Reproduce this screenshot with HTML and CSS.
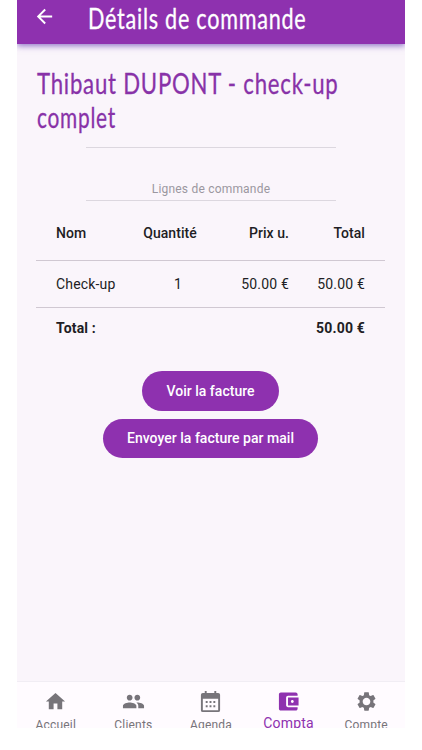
FILE: index.html
```html
<!DOCTYPE html>
<html lang="fr">
<head>
    <meta charset="utf-8">
    <meta name="viewport" content="width=device-width, initial-scale=1">
    <title>Détails de commande</title>
    <link rel="stylesheet" href="styles.css">
</head>
<body>
<div class="app">
    <header class="topbar">
        <svg class="back" viewBox="0 0 24 24"><path d="M20 11H7.83l5.59-5.59L12 4l-8 8 8 8 1.41-1.41L7.83 13H20v-2z"/></svg>
        <h1 class="page-title">Détails de commande</h1>
    </header>

    <main class="content">
        <h2 class="order-title"><span class="line1">Thibaut DUPONT - check-up</span><br><span class="line2">complet</span></h2>
        <div class="section">
            <span>Lignes de commande</span>
        </div>

        <table class="lines">
            <tr class="head">
                <th class="name">Nom</th>
                <th class="qty">Quantité</th>
                <th class="price">Prix u.</th>
                <th class="total">Total</th>
            </tr>
            <tr class="line">
                <td class="name">Check-up</td>
                <td class="qty">1</td>
                <td class="price">50.00 €</td>
                <td class="total">50.00 €</td>
            </tr>
            <tr class="sum">
                <td class="name">Total :</td>
                <td class="total" colspan="3">50.00 €</td>
            </tr>
        </table>

        <div class="actions">
            <button class="btn">Voir la facture</button>
            <button class="btn">Envoyer la facture par mail</button>
        </div>
    </main>

    <nav class="tabs">
        <a class="tab">
            <svg viewBox="0 0 24 24"><path d="M10 20v-6h4v6h5v-8h3L12 3 2 12h3v8z"/></svg>
            <span>Accueil</span>
        </a>
        <a class="tab">
            <svg viewBox="0 0 24 24"><path d="M16 11c1.660 0 2.990-1.340 2.990-3S17.660 5 16 5s-3 1.340-3 3 1.340 3 3 3zm-8 0c1.660 0 2.990-1.340 2.990-3S9.660 5 8 5 5 6.340 5 8s1.340 3 3 3zm0 2c-2.330 0-7 1.170-7 3.500V19h14v-2.500C15 14.170 10.330 13 8 13zm8 0c-.29 0-.62.02-.97.05 1.160.84 1.970 1.970 1.970 3.450V19h6v-2.500c0-2.330-4.670-3.500-7-3.500z"/></svg>
            <span>Clients</span>
        </a>
        <a class="tab">
            <svg viewBox="0 0 24 24"><path fill-rule="evenodd" d="M4 3h2V1h2v2h8V1h2v2h2a2 2 0 0 1 2 2v16a2 2 0 0 1-2 2H4a2 2 0 0 1-2-2V5a2 2 0 0 1 2-2zM4 9v12h16V9z"/><path d="M7 11.500h2v2H7zm4 0h2v2h-2zm4 0h2v2h-2zm-8 4.500h2v2H7zm4 0h2v2h-2zm4 0h2v2h-2z"/></svg>
            <span>Agenda</span>
        </a>
        <a class="tab active">
            <svg viewBox="0 0 24 24"><path d="M21.500 18v1.500c0 1.100-.9 2-2 2H4c-1.110 0-2-.9-2-2v-15c0-1.100.89-2 2-2h15.500c1.100 0 2 .9 2 2V6h-10c-1.110 0-2 .9-2 2v8c0 1.100.89 2 2 2zM11.500 16.300h11V7.700h-11zm4.500-2.800c-.83 0-1.500-.67-1.500-1.500s.67-1.500 1.500-1.500 1.500.67 1.500 1.500-.67 1.500-1.500 1.500z" fill-rule="evenodd"/></svg>
            <span>Compta</span>
        </a>
        <a class="tab">
            <svg viewBox="0 0 24 24"><path d="M19.140 12.940c.04-.3.06-.61.06-.94 0-.32-.02-.64-.07-.94l2.030-1.580c.18-.14.23-.41.12-.61l-1.920-3.320c-.12-.22-.37-.29-.59-.22l-2.390.96c-.5-.38-1.030-.7-1.620-.94l-.36-2.540c-.04-.24-.24-.41-.48-.41h-3.840c-.24 0-.43.17-.47.41l-.36 2.540c-.59.24-1.130.57-1.620.94l-2.390-.96c-.22-.08-.47 0-.59.22L2.740 8.870c-.12.21-.08.47.12.61l2.030 1.580c-.05.3-.09.63-.09.94s.02.64.07.94l-2.030 1.580c-.18.14-.23.41-.12.61l1.920 3.320c.12.22.37.29.59.22l2.390-.96c.5.38 1.030.7 1.620.94l.36 2.540c.05.24.24.41.48.41h3.840c.24 0 .44-.17.47-.41l.36-2.540c.59-.24 1.130-.56 1.620-.94l2.390.96c.22.08.47 0 .59-.22l1.920-3.320c.12-.22.07-.47-.12-.61l-2.010-1.580zM12 16c-2.200 0-4-1.800-4-4s1.800-4 4-4 4 1.800 4 4-1.800 4-4 4z"/></svg>
            <span>Compte</span>
        </a>
    </nav>
</div>
</body>
</html>
```

FILE: styles.css
```css
* {
    box-sizing: border-box;
}

body {
    margin: 0;
    background: #fff;
    font-family: Roboto, "Liberation Sans", sans-serif;
    color: #211d24;
}

.app {
    display: flex;
    flex-direction: column;
    width: 388px;
    height: 728px;
    margin-left: 17px;
    overflow: hidden;
    background: #faf5fb;
}

.topbar {
    display: flex;
    flex: none;
    height: 44px;
    padding-left: 16px;
    background: #8e31af;
    box-shadow: 0 2px 6px rgba(90, 50, 175, 0.65);
}

.back {
    width: 23px;
    height: 23px;
    margin-top: 5px;
    fill: #fff;
}

.page-title,
.order-title {
    margin: 0;
    font-family: Lato, sans-serif;
    font-weight: 400;
    white-space: nowrap;
    letter-spacing: 1px;
    -webkit-text-stroke: 0.3px currentColor;
}

.page-title {
    margin: 0 0 0 32px;
    font-size: 29px;
    line-height: 36px;
    color: #fff;
    transform: scaleX(0.744);
    transform-origin: left;
}

.content {
    flex: 1;
    padding: 22px 20px 0 19px;
}

.order-title {
    height: 81px;
    padding-left: 1px;
    font-size: 29px;
    line-height: 34px;
    color: #8832a8;
}

.order-title span {
    display: inline-block;
    transform: scaleX(0.765);
    transform-origin: left;
}

.order-title .line2 {
    transform: scaleX(0.72);
}

.section {
    display: flex;
    align-items: flex-end;
    justify-content: center;
    width: 250px;
    height: 54px;
    margin: 0 auto 0 50px;
    padding-bottom: 3px;
    border-top: 1px solid #dcd7df;
    border-bottom: 1px solid #dcd7df;
    font-size: 12px;
    line-height: 16px;
    letter-spacing: 0.2px;
    color: #9b97a0;
}

.lines {
    width: 349px;
    table-layout: fixed;
    border-collapse: collapse;
    font-size: 14px;
    letter-spacing: 0.17px;
}

.lines th,
.lines td {
    padding: 0;
    text-align: right;
}

.lines th {
    font-weight: 500;
    letter-spacing: 0.05px;
}

.lines .name {
    width: 100px;
    padding-left: 20px;
    text-align: left;
}

.lines .qty {
    width: 68px;
    text-align: center;
}

.lines td.qty {
    padding-left: 16px;
}

.lines .price {
    width: 85px;
}

.lines .total {
    padding-right: 20px;
}

.head {
    height: 59px;
}

.lines .head th {
    padding-top: 5px;
}

.line {
    height: 47px;
    border-top: 1px solid #d0c8d2;
    border-bottom: 1px solid #d0c8d2;
}

.sum {
    height: 42px;
    font-weight: 700;
}

.actions {
    display: flex;
    flex-direction: column;
    align-items: center;
    gap: 8px;
    margin-top: 22px;
}

.btn {
    height: 39.500px;
    padding: 0 24px;
    border: 0;
    border-radius: 20px;
    background: #8e31af;
    color: #fff;
    font-family: inherit;
    font-size: 14px;
    font-weight: 500;
    letter-spacing: 0.02px;
}

.tabs {
    display: flex;
    flex: none;
    height: 47px;
    border-top: 1px solid #f1edf4;
    background: #fffbff;
}

.tab {
    display: flex;
    flex: 1;
    flex-direction: column;
    align-items: center;
    font-size: 12px;
    line-height: 16px;
    letter-spacing: 0.2px;
    color: #77747a;
}

.tab svg {
    flex: none;
    width: 23px;
    height: 23px;
    margin: 8px 0 4px;
    fill: currentColor;
}

.tab.active {
    font-size: 14px;
    color: #8e31af;
}

.tab.active span {
    margin-top: -2px;
}
```
